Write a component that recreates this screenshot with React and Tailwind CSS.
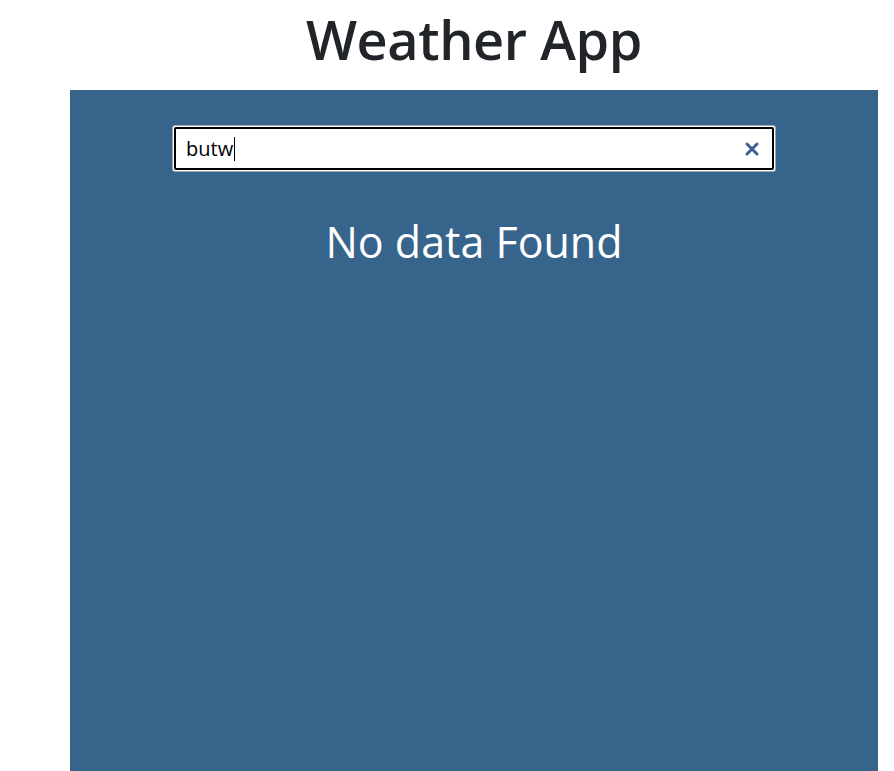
import React from "react";

export default function App() {
  return (
    <div className="min-h-[771px] bg-white" style={{ fontFamily: '"Open Sans", "Noto Sans", sans-serif' }}>
      <div className="ml-[70px] w-[808px]">
        <h1 className="h-[90px] pt-[1px] text-center text-[54px] font-semibold leading-[76px] tracking-[-0.4px] text-[#212529]">
          Weather App
        </h1>
        <div className="flex min-h-[681px] flex-col items-center bg-[#36648b] pt-[35px]">
          <div className="flex h-[47px] w-[604px] items-center rounded-[3px] border border-[#9aa7b5] bg-white p-px">
            <div className="flex h-full w-full items-center rounded-[2px] border-2 border-black pl-[10px] pr-[12px]">
              <span className="text-[20px] leading-none text-black">butw</span>
              <span className="ml-px h-[24px] w-px bg-black" />
              <div className="flex-1" />
              <svg width="16" height="16" viewBox="0 0 16 16" className="text-[#3b5f96]">
                <path d="M3 3 L13 13 M13 3 L3 13" stroke="currentColor" strokeWidth="3" strokeLinecap="round" />
              </svg>
            </div>
          </div>
          <p className="mt-[42px] text-[43px] leading-[56px] text-white">No data Found</p>
        </div>
      </div>
    </div>
  );
}
